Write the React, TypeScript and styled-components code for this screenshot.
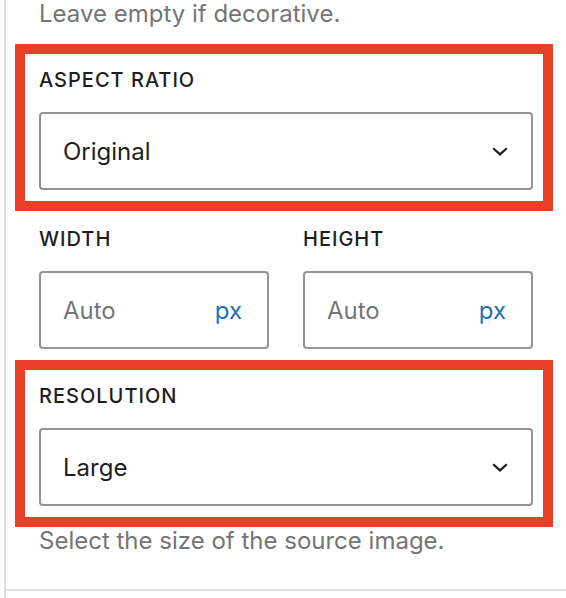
import React, { FC } from 'react';
import styled, { createGlobalStyle } from 'styled-components';

const GlobalStyle = createGlobalStyle`
  html, body {
    margin: 0;
    padding: 0;
    background: #ffffff;
  }
  body {
    font-family: Inter, 'Noto Sans', Arial, sans-serif;
    color: #1e1e1e;
    -webkit-font-smoothing: antialiased;
  }
`;

const StyledPanel = styled.div`
  margin-left: 4px;
  min-height: 100vh;
  border-left: 2px solid #dddddd;
  box-sizing: border-box;
`;

const StyledSection = styled.div`
  display: flex;
  flex-direction: column;
  padding: 0 33px 34px;
  border-bottom: 2px solid #e0e0e0;
`;

const StyledHelp = styled.p<{ $gap?: number }>`
  margin: 0 0 ${({ $gap }) => $gap ?? 0}px;
  font-size: 24px;
  line-height: 28px;
  color: #757575;
`;

const StyledHighlight = styled.div`
  margin: 0 -20px 0 -24px;
  padding: 14px 10px 11px 14px;
  border: 10px solid #e83f26;
  display: flex;
  flex-direction: column;
  gap: 20px;
`;

const StyledLabel = styled.label`
  display: block;
  font-size: 20px;
  line-height: 24px;
  font-weight: 500;
  letter-spacing: 1px;
  text-transform: uppercase;
  color: #1e1e1e;
`;

const StyledSelectWrap = styled.div`
  position: relative;
`;

const StyledSelect = styled.select`
  appearance: none;
  -webkit-appearance: none;
  display: block;
  width: 100%;
  height: 78px;
  box-sizing: border-box;
  margin: 0;
  padding: 0 60px 0 22px;
  border: 2px solid #949494;
  border-radius: 4px;
  background: #ffffff;
  font-family: inherit;
  font-size: 24px;
  color: #1e1e1e;
  outline: none;
`;

const StyledChevron = styled.svg`
  position: absolute;
  right: 25px;
  top: 50%;
  margin-top: -4px;
  pointer-events: none;
`;

const StyledSizeRow = styled.div`
  display: grid;
  grid-template-columns: minmax(0, 1fr) minmax(0, 1fr);
  column-gap: 34px;
  margin: 16px 0 11px;
`;

const StyledField = styled.div`
  display: flex;
  flex-direction: column;
  gap: 20px;
  min-width: 0;
`;

const StyledUnitBox = styled.div`
  display: flex;
  align-items: center;
  height: 78px;
  box-sizing: border-box;
  padding: 0 25px 0 22px;
  border: 2px solid #949494;
  border-radius: 4px;
`;

const StyledNumberInput = styled.input`
  flex: 1;
  width: 0;
  min-width: 0;
  border: none;
  outline: none;
  padding: 0;
  font-family: inherit;
  font-size: 24px;
  color: #1e1e1e;
  background: transparent;

  &::placeholder {
    color: #757575;
    opacity: 1;
  }
`;

const StyledUnit = styled.span`
  font-size: 24px;
  color: #2271b1;
`;

type SelectFieldProps = {
  label: string;
  value: string;
  options: string[];
};

const SelectField: FC<SelectFieldProps> = ({ label, value, options }) => (
  <StyledHighlight>
    <StyledLabel>{label}</StyledLabel>
    <StyledSelectWrap>
      <StyledSelect defaultValue={value}>
        {options.map((option) => (
          <option key={option}>{option}</option>
        ))}
      </StyledSelect>
      <StyledChevron width="16" height="9" viewBox="0 0 16 9" aria-hidden="true">
        <path d="M1.2 1.2 L8 7.4 L14.8 1.2" fill="none" stroke="#1e1e1e" strokeWidth="2.2" />
      </StyledChevron>
    </StyledSelectWrap>
  </StyledHighlight>
);

const UnitField: FC<{ label: string }> = ({ label }) => (
  <StyledField>
    <StyledLabel>{label}</StyledLabel>
    <StyledUnitBox>
      <StyledNumberInput type="text" placeholder="Auto" />
      <StyledUnit>px</StyledUnit>
    </StyledUnitBox>
  </StyledField>
);

const App: FC = () => (
  <>
    <GlobalStyle />
    <StyledPanel>
      <StyledSection>
        <StyledHelp $gap={16}>Leave empty if decorative.</StyledHelp>
        <SelectField label="Aspect ratio" value="Original" options={['Original', 'Square - 1:1', '16:9']} />
        <StyledSizeRow>
          <UnitField label="Width" />
          <UnitField label="Height" />
        </StyledSizeRow>
        <SelectField label="Resolution" value="Large" options={['Thumbnail', 'Medium', 'Large', 'Full Size']} />
        <StyledHelp>Select the size of the source image.</StyledHelp>
      </StyledSection>
    </StyledPanel>
  </>
);

export default App;
